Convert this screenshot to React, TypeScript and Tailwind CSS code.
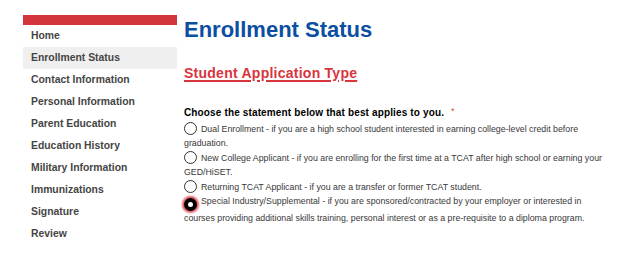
import React from "react";

const items = [
  "Home",
  "Enrollment Status",
  "Contact Information",
  "Personal Information",
  "Parent Education",
  "Education History",
  "Military Information",
  "Immunizations",
  "Signature",
  "Review",
];

const options: { title: string; rest: string; selected?: boolean }[] = [
  {
    title: "Dual Enrollment",
    rest: " - if you are a high school student interested in earning college-level credit before graduation.",
  },
  {
    title: "New College Applicant",
    rest: " - if you are enrolling for the first time at a TCAT after high school or earning your GED/HiSET.",
  },
  {
    title: "Returning TCAT Applicant",
    rest: " - if you are a transfer or former TCAT student.",
  },
  {
    title: "Special Industry/Supplemental",
    rest: " - if you are sponsored/contracted by your employer or interested in courses providing additional skills training, personal interest or as a pre-requisite to a diploma program.",
    selected: true,
  },
];

function Radio({ selected }: { selected?: boolean }) {
  if (selected) {
    return (
      <span className="inline-flex items-center justify-center w-[13px] h-[13px] rounded-full bg-black align-[-3px] mr-[4px] shadow-[0_0_2px_2px_rgba(215,30,40,0.75)]">
        <span className="block w-[5px] h-[5px] rounded-full bg-white" />
      </span>
    );
  }
  return (
    <span className="inline-block w-[13px] h-[13px] rounded-full border-[1.3px] border-[#333] bg-white align-[-3px] mr-[4px]" />
  );
}

export default function App() {
  return (
    <div
      className="w-[617px] h-[258px] bg-white overflow-hidden flex pt-[15px] pl-[23px]"
      style={{ fontFamily: '"Liberation Sans", Arial, sans-serif' }}
    >
      <div className="w-[154px] shrink-0">
        <div className="h-[10px] bg-[#d4343b]" />
        <ul>
          {items.map((it) => (
            <li
              key={it}
              className={
                "h-[22px] flex items-center pl-[8px] text-[10.4px] font-bold text-[#454545] " +
                (it === "Enrollment Status" ? "bg-[#efefef]" : "")
              }
            >
              {it}
            </li>
          ))}
        </ul>
      </div>
      <div className="ml-[7px] w-[426px] shrink-0 pt-[4px]">
        <h1 className="text-[22px] leading-[22px] font-bold text-[#0b4ea2]">Enrollment Status</h1>
        <h2 className="mt-[25px] text-[14px] leading-[14px] font-bold tracking-[0.25px] text-[#d8353c] underline underline-offset-[2px] decoration-[1.5px]">
          Student Application Type
        </h2>
        <p className="mt-[26px] text-[10px] leading-[10px] font-bold tracking-[0.14px] text-black">
          Choose the statement below that best applies to you.
          <span className="ml-[7px] text-[#e8454a] text-[9px] font-normal align-[2px]">*</span>
        </p>
        <div className="mt-[4px] text-[8.8px] leading-[14.4px] text-[#383838]">
          {options.map((o) => (
            <div key={o.title}>
              <Radio selected={o.selected} />
              {o.title}
              {o.rest}
            </div>
          ))}
        </div>
      </div>
    </div>
  );
}
